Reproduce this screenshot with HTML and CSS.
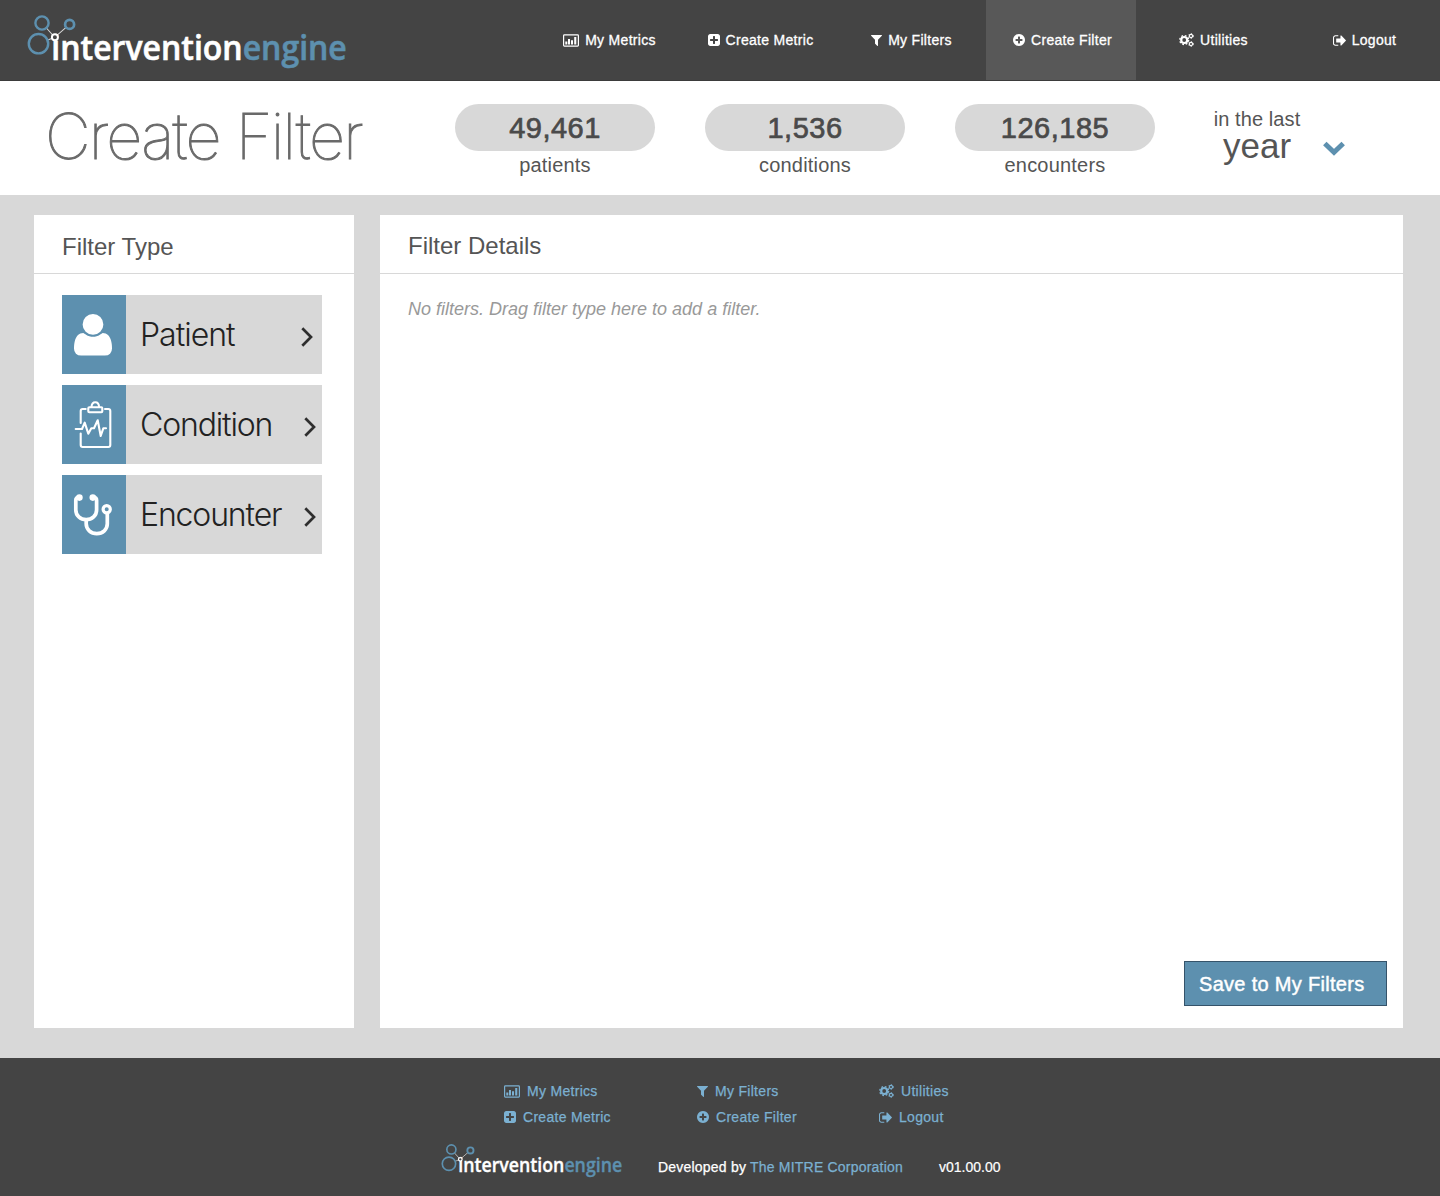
FILE: index.html
```html
<!DOCTYPE html>
<html lang="en">
<head>
<meta charset="utf-8">
<title>Intervention Engine - Create Filter</title>
<link rel="stylesheet" href="styles.css">
</head>
<body>
<svg class="sprite" aria-hidden="true">
  <symbol id="chart" viewBox="0 0 16 13">
    <rect x=".6" y=".9" width="14.8" height="11.2" rx=".8" fill="none" stroke="currentColor" stroke-width="1.2"/>
    <path d="M2.300 7.500h2v3.100H2.300zM5 5H7v5.600H5zM8 6.300H10v4.300H8zM11.200 2.900H13.300v7.700h-2.100z" fill="currentColor"/>
  </symbol>
  <symbol id="plus-square" viewBox="128 128 1536 1536"><path fill="currentColor" d="M1408 960v-128q0-26-19-45t-45-19h-320v-320q0-26-19-45t-45-19h-128q-26 0-45 19t-19 45v320h-320q-26 0-45 19t-19 45v128q0 26 19 45t45 19h320v320q0 26 19 45t45 19h128q26 0 45-19t19-45v-320h320q26 0 45-19t19-45zm256-544v960q0 119-84.5 203.5t-203.5 84.5h-960q-119 0-203.5-84.5t-84.5-203.5v-960q0-119 84.5-203.5t203.5-84.5h960q119 0 203.5 84.5t84.5 203.5z"/></symbol>
  <symbol id="plus-circle" viewBox="128 128 1536 1536"><path fill="currentColor" d="M1344 960v-128q0-26-19-45t-45-19h-256v-256q0-26-19-45t-45-19h-128q-26 0-45 19t-19 45v256h-256q-26 0-45 19t-19 45v128q0 26 19 45t45 19h256v256q0 26 19 45t45 19h128q26 0 45-19t19-45v-256h256q26 0 45-19t19-45zm320-64q0 209-103 385.5t-279.5 279.5-385.5 103-385.5-103-279.5-279.5-103-385.5 103-385.5 279.5-279.5 385.5-103 385.5 103 279.5 279.5 103 385.5z"/></symbol>
  <symbol id="funnel" viewBox="192 256 1408 1408"><path fill="currentColor" d="M1595 295q17 41-14 70l-493 493v742q0 42-39 59-13 5-25 5-27 0-45-19l-256-256q-19-19-19-45v-486l-493-493q-31-29-14-70 17-39 59-39h1280q42 0 59 39z"/></symbol>
  <symbol id="sign-out" viewBox="64 256 1568 1280"><path fill="currentColor" d="M704 1440q0 4 1 20t.5 26.5-3 23.5-10 19.5-20.5 6.5h-320q-119 0-203.5-84.5t-84.5-203.5v-704q0-119 84.5-203.5t203.5-84.5h320q13 0 22.5 9.500t9.500 22.500q0 4 1 20t.5 26.500-3 23.500-10 19.500-20.500 6.500h-320q-66 0-113 47t-47 113v704q0 66 47 113t113 47h312l11.500 1 11.500 3 8 5.500 7 9 2 13.500zm928-544q0 26-19 45l-544 544q-19 19-45 19t-45-19-19-45v-288h-448q-26 0-45-19t-19-45v-384q0-26 19-45t45-19h448v-288q0-26 19-45t45-19 45 19l544 544q19 19 19 45z"/></symbol>
  <symbol id="cogs" viewBox="0 0 15 14">
    <g fill="none" stroke="currentColor">
      <circle cx="5.2" cy="7" r="3" stroke-width="2.2"/>
      <circle cx="5.2" cy="7" r="4.5" stroke-width="1.300" stroke-dasharray="1.77 1.77"/>
      <circle cx="12" cy="3" r="1.6" stroke-width="1.1"/>
      <circle cx="12" cy="3" r="2.400" stroke-width=".9" stroke-dasharray="1.2 1.31"/>
      <circle cx="12" cy="11" r="1.6" stroke-width="1.1"/>
      <circle cx="12" cy="11" r="2.400" stroke-width=".9" stroke-dasharray="1.2 1.31"/>
    </g>
  </symbol>
  <symbol id="arrow" viewBox="0 0 12 20"><path d="M1.300 1.200L10 10L1.300 18.800" fill="none" stroke="#2e2e2e" stroke-width="2.7"/></symbol>
  <g id="mark">
    <path d="M42 23L54.700 37.300L69.500 24.300M54.700 37.300L38.500 43.700" stroke="#d5d5d5" stroke-width="1.1" fill="none"/>
    <g fill="#444" stroke="#5d90af" stroke-width="2.4">
      <circle cx="38.500" cy="43.700" r="9.700"/><circle cx="42" cy="23" r="6.600"/><circle cx="69.600" cy="24.400" r="4.500" stroke-width="2.700"/>
    </g>
  </g>
  <circle id="hub" cx="54.900" cy="37.300" r="3" fill="#444" stroke="#fff" stroke-width="2"/>
</svg>

<header class="topbar">
  <svg class="logo" viewBox="27 14 320 55">
    <use href="#mark"/>
    <text class="logo-text" x="51.300" y="59.700" textLength="295.500" lengthAdjust="spacingAndGlyphs">intervention<tspan class="logo-accent">engine</tspan></text>
    <use href="#hub"/>
  </svg>
  <nav class="nav">
    <a class="nav-item"><svg class="i-chart"><use href="#chart"/></svg><span>My Metrics</span></a>
    <a class="nav-item"><svg class="i-plus"><use href="#plus-square"/></svg><span>Create Metric</span></a>
    <a class="nav-item"><svg class="i-funnel"><use href="#funnel"/></svg><span>My Filters</span></a>
    <a class="nav-item active"><svg class="i-plus"><use href="#plus-circle"/></svg><span>Create Filter</span></a>
    <a class="nav-item"><svg class="i-cogs"><use href="#cogs"/></svg><span>Utilities</span></a>
    <a class="nav-item"><svg class="i-out"><use href="#sign-out"/></svg><span>Logout</span></a>
  </nav>
</header>

<section class="summary">
  <h1 class="title">Create Filter</h1>
  <div class="stats">
    <div class="stat"><div class="pill">49,461</div><div class="stat-label">patients</div></div>
    <div class="stat"><div class="pill">1,536</div><div class="stat-label">conditions</div></div>
    <div class="stat"><div class="pill">126,185</div><div class="stat-label">encounters</div></div>
  </div>
  <div class="period">
    <div class="period-text"><div class="period-lead">in the last</div><div class="period-value">year</div></div>
    <svg class="period-arrow" viewBox="0 0 22 15"><path d="M1.800 2.500L11 11.200L20.200 2.500" fill="none" stroke="#5d90af" stroke-width="5"/></svg>
  </div>
</section>

<main class="content">
  <section class="panel types">
    <h2 class="panel-head">Filter Type</h2>
    <div class="type-list">
      <div class="type">
        <svg class="type-icon" viewBox="0 0 64 79"><path transform="translate(6.800 15.600) scale(.027)" fill="#fff" d="M1600 1405q0 120-73 189.500t-194 69.500h-874q-121 0-194-69.500t-73-189.500q0-53 3.500-103.500t14-109 26.500-108.500 43-97.500 62-81 85.500-53.500 111.500-20q9 0 42 21.500t74.500 48 108 48 133.500 21.500 133.500-21.500 108-48 74.500-48 42-21.500q61 0 111.500 20t85.500 53.500 62 81 43 97.500 26.500 108.500 14 109 3.500 103.500zm-320-893q0 159-112.500 271.500t-271.500 112.500-271.500-112.500-112.500-271.500 112.500-271.500 271.500-112.500 271.500 112.500 112.500 271.500z"/></svg>
        <span class="type-name patient">Patient</span><svg class="type-arrow near"><use href="#arrow"/></svg>
      </div>
      <div class="type">
        <svg class="type-icon" viewBox="0 0 64 79"><g fill="none" stroke="#fff" stroke-width="2.1" stroke-linecap="round" stroke-linejoin="round"><path d="M18.700 38V26q0-2 2-2h3M43 24h3.300q2 0 2 2v34q0 2-2 2H20.700q-2 0-2-2V48.500"/><rect x="26.300" y="22.300" width="14" height="5" rx="1"/><path d="M29.500 22q.3-4.700 3.800-4.700t3.800 4.700"/><path d="M13.700 44H20l2.700-6.300 3.600 11 3-5.400H32l3.700-8L38.700 51l2.600-7.700H44"/></g></svg>
        <span class="type-name condition">Condition</span><svg class="type-arrow"><use href="#arrow"/></svg>
      </div>
      <div class="type">
        <svg class="type-icon" viewBox="0 0 64 79"><g fill="none" stroke="#fff" stroke-width="3.700"><path d="M17 22.300q-3.200 0-3.200 3V35c0 5.500 4.500 9.500 10.400 9.500S34.600 40.500 34.600 35V25.300q0-3-3.200-3"/><path d="M24.200 44.500v4.300c0 5.600 4.600 9.800 10.600 9.800s10.500-4.200 10.500-9.800V38"/><circle cx="44.700" cy="34.200" r="3.600" stroke-width="3.200"/></g><circle cx="17.400" cy="22.600" r="3.300" fill="#fff"/><circle cx="30.800" cy="22.600" r="3.300" fill="#fff"/></svg>
        <span class="type-name encounter">Encounter</span><svg class="type-arrow"><use href="#arrow"/></svg>
      </div>
    </div>
  </section>
  <section class="panel details">
    <h2 class="panel-head">Filter Details</h2>
    <p class="empty">No filters. Drag filter type here to add a filter.</p>
    <button class="save">Save to My Filters</button>
  </section>
</main>

<footer class="footer">
  <div class="footer-links">
    <a><svg class="i-chart"><use href="#chart"/></svg><span>My Metrics</span></a>
    <a><svg class="i-funnel"><use href="#funnel"/></svg><span>My Filters</span></a>
    <a><svg class="i-cogs"><use href="#cogs"/></svg><span>Utilities</span></a>
    <a><svg class="i-plus"><use href="#plus-square"/></svg><span>Create Metric</span></a>
    <a><svg class="i-plus"><use href="#plus-circle"/></svg><span>Create Filter</span></a>
    <a><svg class="i-out"><use href="#sign-out"/></svg><span>Logout</span></a>
  </div>
  <div class="footer-info">
    <svg class="footer-logo" viewBox="0 0 182 34">
      <use href="#mark" transform="translate(-18.600 -9.400) scale(.69)"/>
      <text class="logo-text small" x="17.200" y="29.200" textLength="164" lengthAdjust="spacingAndGlyphs">intervention<tspan class="logo-accent">engine</tspan></text>
      <use href="#hub" transform="translate(-14.200 -5.300) scale(.61 .58)"/>
    </svg>
    <span class="credit">Developed by <a>The MITRE Corporation</a></span>
    <span class="version">v01.00.00</span>
  </div>
</footer>
</body>
</html>
```
FILE: styles.css
```css
* { box-sizing: border-box; }
body { margin: 0; background: #d8d8d8; color: #555; font-family: "Liberation Sans", Arial, sans-serif; }
h1, h2, p { margin: 0; font-weight: 400; }
svg { display: block; flex: none; }
.sprite { position: absolute; width: 0; height: 0; }

.topbar { display: flex; justify-content: space-between; height: 81px; padding: 0 2px 0 27px; background: #444; border-bottom: 1px solid #3b3b3b; }
.logo { width: 320px; height: 55px; margin-top: 14px; overflow: visible; }
.logo-text { font: 600 33.5px "Open Sans", sans-serif; fill: #fff; stroke: #fff; stroke-width: .6px; }
.logo-text.small { font-size: 19px; stroke-width: .35px; }
.logo-accent { fill: #5d90af; stroke: #5d90af; }
.nav { display: flex; gap: 1px; }
.nav-item { display: flex; align-items: center; justify-content: center; gap: 6px; width: 150px; height: 80px; padding-left: 3px; color: #fff; font-size: 14px; line-height: 16px; letter-spacing: .3px; -webkit-text-stroke: .3px; }
.nav-item.active { background: #585858; }
.i-chart { width: 16px; height: 13px; }
.i-plus { width: 12px; height: 12px; }
.i-funnel { width: 11px; height: 11px; }
.i-cogs { width: 15px; height: 14px; }
.i-out { width: 13px; height: 11px; }

.summary { display: flex; height: 114px; padding-left: 45px; background: #fff; }
.title { width: 410px; font: 100 63px/110px Inter, sans-serif; letter-spacing: -1.8px; white-space: nowrap; color: #6a6a6a; -webkit-text-stroke: 1px; }
.stats { display: flex; gap: 50px; padding-top: 23px; }
.stat { width: 200px; text-align: center; }
.pill { height: 47px; border-radius: 24px; background: #d8d8d8; color: #4a4a4a; font-size: 29px; line-height: 48px; letter-spacing: .5px; -webkit-text-stroke: .7px; }
.stat-label { font-size: 20px; line-height: 28px; letter-spacing: .2px; }
.period { display: flex; padding: 28px 0 0 58px; }
.period-text { width: 88px; text-align: center; }
.period-lead { font-size: 20px; line-height: 20px; letter-spacing: .1px; white-space: nowrap; }
.period-value { font-size: 35px; line-height: 34px; }
.period-arrow { width: 22px; height: 15px; margin: 32px 0 0 22px; }

.content { display: flex; gap: 26px; height: 863px; padding: 20px 37px 30px 34px; }
.panel { background: #fff; }
.types { width: 320px; }
.details { flex: 1; display: flex; flex-direction: column; }
.panel-head { height: 59px; padding-left: 28px; border-bottom: 1px solid #d8d8d8; font-size: 24px; line-height: 62px; }
.types .panel-head { line-height: 64px; }
.type-list { display: flex; flex-direction: column; gap: 11px; padding: 21px 32px 0 28px; }
.type { display: flex; align-items: center; height: 79px; padding-right: 6px; background: #d8d8d8; color: #222; }
.type-icon { width: 64px; height: 79px; background: #5d90af; }
.type-name { flex: 1; padding-left: 14px; font: 300 32px/80px Inter, sans-serif; letter-spacing: -1.15px; }
.type-name.patient { letter-spacing: -1px; }
.type-arrow { width: 12px; height: 20px; margin-top: 4px; }
.type-arrow.near { margin-right: 3px; }
.empty { padding: 22px 0 0 28px; color: #999; font-size: 18px; font-style: italic; line-height: 26px; }
.save { align-self: flex-end; width: 203px; height: 45px; margin: auto 16px 22px 0; padding: 2px 0 0 14px; border: 1px solid #35536a; background: #5d90af; color: #fff; font: 20px/41px "Liberation Sans", Arial, sans-serif; letter-spacing: .3px; text-align: left; -webkit-text-stroke: .45px; }

.footer { height: 138px; padding-top: 20px; background: #444; }
.footer-links { display: grid; grid-template-columns: 193px 182px 150px; grid-auto-rows: 26px; padding-left: 504px; }
.footer-links a { display: flex; align-items: center; gap: 7px; color: #7bb0d1; font-size: 14px; letter-spacing: .3px; -webkit-text-stroke: .25px; }
.footer-info { display: flex; align-items: center; padding: 13px 0 0 441px; color: #fff; font-size: 14px; }
.footer-info a { color: #7bb0d1; }
.footer-logo { width: 182px; height: 34px; overflow: visible; }
.credit { width: 281px; margin-left: 35px; padding-top: 14px; white-space: nowrap; letter-spacing: .21px; -webkit-text-stroke: .25px; }
.version { padding-top: 14px; -webkit-text-stroke: .2px; }
```
